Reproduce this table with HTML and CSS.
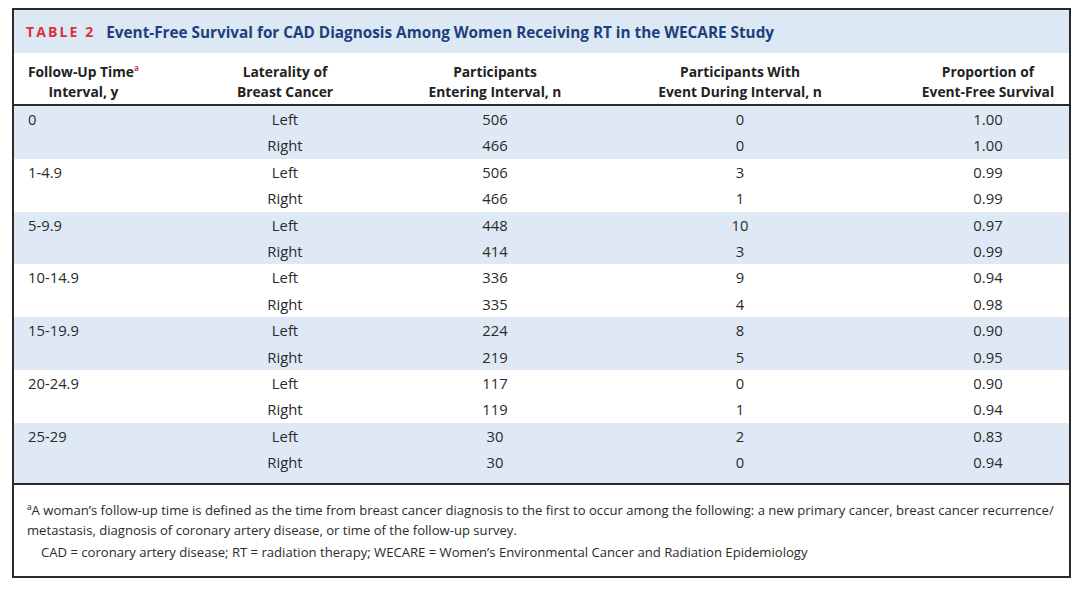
FILE: index.html
```html
<!DOCTYPE html>
<html>
<head>
<meta charset="utf-8">
<link rel="stylesheet" href="styles.css">
</head>
<body>
<div class="frame">
  <div class="title"><span class="label">TABLE 2</span><span class="caption">Event-Free Survival for CAD Diagnosis Among Women Receiving RT in the WECARE Study</span></div>
  <table class="data">
    <colgroup>
      <col class="c1"><col class="c2"><col class="c3"><col class="c4"><col class="c5">
    </colgroup>
    <thead>
      <tr>
        <th class="first"><span class="stack">Follow-Up Time<sup>a</sup><br>Interval, y</span></th>
        <th>Laterality of<br>Breast Cancer</th>
        <th>Participants<br>Entering Interval, n</th>
        <th>Participants With<br>Event During Interval, n</th>
        <th class="last">Proportion of<br>Event-Free Survival</th>
      </tr>
    </thead>
    <tbody>
      <tr class="shade"><td class="first">0</td><td>Left</td><td>506</td><td>0</td><td class="last">1.00</td></tr>
      <tr class="shade"><td class="first"></td><td>Right</td><td>466</td><td>0</td><td class="last">1.00</td></tr>
      <tr><td class="first">1-4.9</td><td>Left</td><td>506</td><td>3</td><td class="last">0.99</td></tr>
      <tr><td class="first"></td><td>Right</td><td>466</td><td>1</td><td class="last">0.99</td></tr>
      <tr class="shade"><td class="first">5-9.9</td><td>Left</td><td>448</td><td>10</td><td class="last">0.97</td></tr>
      <tr class="shade"><td class="first"></td><td>Right</td><td>414</td><td>3</td><td class="last">0.99</td></tr>
      <tr><td class="first">10-14.9</td><td>Left</td><td>336</td><td>9</td><td class="last">0.94</td></tr>
      <tr><td class="first"></td><td>Right</td><td>335</td><td>4</td><td class="last">0.98</td></tr>
      <tr class="shade"><td class="first">15-19.9</td><td>Left</td><td>224</td><td>8</td><td class="last">0.90</td></tr>
      <tr class="shade"><td class="first"></td><td>Right</td><td>219</td><td>5</td><td class="last">0.95</td></tr>
      <tr><td class="first">20-24.9</td><td>Left</td><td>117</td><td>0</td><td class="last">0.90</td></tr>
      <tr><td class="first"></td><td>Right</td><td>119</td><td>1</td><td class="last">0.94</td></tr>
      <tr class="shade"><td class="first">25-29</td><td>Left</td><td>30</td><td>2</td><td class="last">0.83</td></tr>
      <tr class="shade end"><td class="first"></td><td>Right</td><td>30</td><td>0</td><td class="last">0.94</td></tr>
    </tbody>
  </table>
  <div class="notes">
    <p class="note">ªA woman’s follow-up time is defined as the time from breast cancer diagnosis to the first to occur among the following: a new primary cancer, breast cancer recurrence/ metastasis, diagnosis of coronary artery disease, or time of the follow-up survey.</p>
    <p class="abbr">CAD = coronary artery disease; RT = radiation therapy; WECARE = Women’s Environmental Cancer and Radiation Epidemiology</p>
  </div>
</div>
</body>
</html>
```

FILE: styles.css
```css
html, body {
  margin: 0;
  padding: 0;
  background: #ffffff;
}
body {
  padding: 8px 0 0 12px;
  font-family: "Open Sans", "Noto Sans", sans-serif;
  color: #2a2a2a;
}
.frame {
  width: 1055px;
  height: 566px;
  border: 2px solid #2b2b2b;
  display: flex;
  flex-direction: column;
}
.title {
  height: 43px;
  background: #dde8f5;
  display: flex;
  align-items: center;
  padding-left: 12px;
  gap: 11px;
}
.label {
  color: #d8323c;
  font-weight: 700;
  font-size: 14px;
  letter-spacing: 2.1px;
}
.caption {
  color: #1d3f7c;
  font-weight: 700;
  font-size: 15.3px;
}
.data {
  width: 100%;
  border-collapse: collapse;
  table-layout: fixed;
}
.c1 { width: 186px; }
.c2 { width: 170px; }
.c3 { width: 250px; }
.c4 { width: 240px; }
.c5 { width: 209px; }
.data th {
  font-size: 13.8px;
  font-weight: 700;
  line-height: 20px;
  color: #222;
  text-align: center;
  padding: 9px 0 2px;
  border-bottom: 2px solid #2b2b2b;
  vertical-align: top;
}
.data th.first {
  text-align: left;
  padding-left: 14px;
}
.stack {
  display: inline-block;
  text-align: center;
}
.data th sup {
  font-size: 8px;
  color: #d8323c;
  line-height: 0;
}
.data th.last, .data td.last {
  padding-left: 47px;
}
.data td {
  font-size: 14.8px;
  height: 26.4px;
  line-height: 26.4px;
  padding: 0;
  text-align: center;
  vertical-align: top;
  color: #2a2a2a;
}
.data td.first {
  text-align: left;
  padding-left: 14px;
}
.shade td {
  background: #dfe9f6;
}
.end td {
  height: 34px;
  border-bottom: 2px solid #2b2b2b;
}
.notes {
  padding: 15px 14px 0 13px;
  font-size: 13.1px;
  line-height: 20px;
  color: #2a2a2a;
}
.notes p {
  margin: 0;
}
.abbr {
  padding-left: 14px;
  margin-top: 2px !important;
}
```
